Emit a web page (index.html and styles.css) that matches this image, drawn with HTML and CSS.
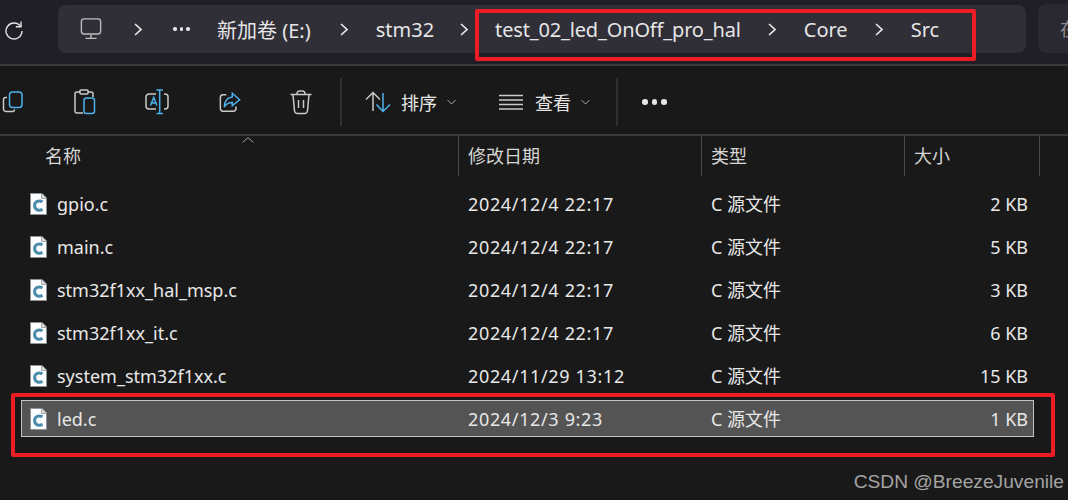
FILE: index.html
```html
<!DOCTYPE html>
<html lang="zh-CN">
<head>
    <meta charset="UTF-8">
    <title>Src</title>
    <link rel="stylesheet" href="styles.css">
</head>
<body>
    <svg class="sprite" width="0" height="0">
        <symbol id="file-c" viewBox="0 0 17 22">
            <path d="M.5.5H12L16.5 5V21.5H.5Z" fill="#fcfdfe" stroke="#8f9295"/>
            <path d="M11.5 1V5.5H16" fill="#d8dadc" stroke="#a5a7a9"/>
            <path d="M12.5 8.8C9 6.8 4.6 8.300 4.6 12.6S9 18.4 12.5 16.400" fill="none" stroke="#4b8cab" stroke-width="3"/>
        </symbol>
        <symbol id="chev" viewBox="0 0 8 13">
            <path d="M1 1L7 6.500L1 12" fill="none" stroke="#ececec" stroke-width="1.600"/>
        </symbol>
    </svg>

    <div class="addressbar">
        <svg class="refresh" width="20" height="20" viewBox="0 0 20 20" fill="none" stroke="#e4e4e4" stroke-width="1.400"><path d="M16.600 6.500A8 8 0 1 0 18 11"/><path d="M17 1.500V6.800H11.800"/></svg>
        <div class="breadcrumb">
            <svg class="pc" width="22" height="22" viewBox="0 0 24 24" fill="none" stroke="#bdbdbd" stroke-width="1.500"><rect x="1.500" y="1" width="21" height="16.500" rx="3"/><path d="M12 18V22M6 22.200H18"/></svg>
            <svg class="chev chev-first" width="8" height="13"><use href="#chev"/></svg>
            <span class="crumb-dots"><i></i><i></i><i></i></span>
            <span class="crumb crumb-disk">新加卷 (E:)</span>
            <svg class="chev" width="8" height="13"><use href="#chev"/></svg>
            <span class="crumb crumb-stm">stm32</span>
            <svg class="chev" width="8" height="13"><use href="#chev"/></svg>
            <span class="crumb crumb-test">test_02_led_OnOff_pro_hal</span>
            <svg class="chev" width="8" height="13"><use href="#chev"/></svg>
            <span class="crumb">Core</span>
            <svg class="chev" width="8" height="13"><use href="#chev"/></svg>
            <span class="crumb">Src</span>
        </div>
        <div class="search">在</div>
    </div>

    <div class="toolbar">
        <button class="tool tool-copy">
            <svg width="22" height="24" viewBox="0 0 22 24" fill="none" stroke-width="1.500"><path d="M5 7.500H3.500A2 2 0 0 0 1.500 9.500V19A2.500 2.500 0 0 0 4 21.500H10.500A2 2 0 0 0 12.500 19.500" stroke="#c9c9c9"/><rect x="7.500" y="2" width="12.500" height="15.500" rx="3" stroke="#4db2ec"/></svg>
        </button>
        <button class="tool tool-paste">
            <svg width="22" height="26" viewBox="0 0 22 26" fill="none" stroke-width="1.500"><path d="M6 3H3A2 2 0 0 0 1 5V22A2 2 0 0 0 3 24H9" stroke="#c9c9c9"/><path d="M14 3H17A2 2 0 0 1 19 5V8" stroke="#c9c9c9"/><rect x="6" y="1" width="8" height="4" rx="1" stroke="#c9c9c9"/><rect x="10" y="9" width="10.500" height="15.500" rx="2.500" stroke="#4db2ec"/></svg>
        </button>
        <button class="tool tool-rename">
            <svg width="24" height="26" viewBox="0 0 24 26" fill="none" stroke-width="1.500"><path d="M11 5H4A3 3 0 0 0 1 8V17A3 3 0 0 0 4 20H11M19 5H20A3 3 0 0 1 23 8V17A3 3 0 0 1 20 20H19" stroke="#c9c9c9"/><path d="M11.500 1H18M14.700 1V24.500M11.500 24.500H18" stroke="#4db2ec"/><path d="M5.500 16.500L8.700 8.500L12 16.500M6.700 14H11" stroke="#4db2ec"/></svg>
        </button>
        <button class="tool tool-share">
            <svg width="22" height="22" viewBox="0 0 24 24" fill="none" stroke-width="1.600"><path d="M8 4H4.500A3 3 0 0 0 1.500 7V19A3 3 0 0 0 4.500 22H15.500A3 3 0 0 0 18.500 19V17" stroke="#c9c9c9"/><path d="M14.500 2.500L22.500 9.500L14.500 16V12.500C10.500 12.500 7.800 14 5.800 17.500C6 11 9.500 7 14.500 6.500Z" stroke="#4db2ec"/></svg>
        </button>
        <button class="tool tool-trash">
            <svg width="22" height="25" viewBox="0 0 22 25" fill="none" stroke="#c9c9c9" stroke-width="1.500"><path d="M.5 4.500H21.500M7 4.500V3.500A2.500 2.500 0 0 1 9.500 1H12.500A2.500 2.500 0 0 1 15 3.500V4.500"/><path d="M3 4.500L4.500 21A3 3 0 0 0 7.500 23.500H14.500A3 3 0 0 0 17.500 21L19 4.500"/><path d="M8.500 10V18M13.500 10V18"/></svg>
        </button>
        <span class="tool-sep sep-first"></span>
        <button class="tool tool-sort">
            <svg width="26" height="22" viewBox="0 0 26 22" fill="none" stroke-width="1.500"><path d="M8 20V2M1 8.500L8 1.500L15 8.500" stroke="#c9c9c9"/><path d="M18 2V20M11.500 13.500L18 20.500L25 13.500" stroke="#4db2ec"/></svg>
            <span class="tool-label">排序</span>
            <svg class="caret" width="9" height="6" viewBox="0 0 9 6" fill="none" stroke="#a8a8a8"><path d="M.5 1L4.500 5L8.500 1"/></svg>
        </button>
        <button class="tool tool-view">
            <svg width="24" height="16" viewBox="0 0 24 16" fill="none" stroke="#c9c9c9" stroke-width="1.500"><path d="M0 1.500H24M0 6H24M0 10.500H24M0 15H24"/></svg>
            <span class="tool-label">查看</span>
            <svg class="caret" width="9" height="6" viewBox="0 0 9 6" fill="none" stroke="#a8a8a8"><path d="M.5 1L4.500 5L8.500 1"/></svg>
        </button>
        <span class="tool-sep sep-second"></span>
        <div class="tool-more"><i></i><i></i><i></i></div>
    </div>

    <div class="list-head">
        <div class="col col-name">名称<svg class="sort-up" width="12" height="6" viewBox="0 0 12 6" fill="none" stroke="#a0a0a0"><path d="M.5 5.500L6 .7L11.500 5.500"/></svg></div>
        <div class="col col-date">修改日期</div>
        <div class="col col-type">类型</div>
        <div class="col col-size">大小</div>
    </div>

    <div class="rows">
        <div class="row">
            <div class="cell-name"><svg class="icon" width="17" height="22"><use href="#file-c"/></svg>gpio.c</div>
            <div class="cell-date">2024/12/4 22:17</div>
            <div class="cell-type">C 源文件</div>
            <div class="cell-size">2 KB</div>
        </div>
        <div class="row">
            <div class="cell-name"><svg class="icon" width="17" height="22"><use href="#file-c"/></svg>main.c</div>
            <div class="cell-date">2024/12/4 22:17</div>
            <div class="cell-type">C 源文件</div>
            <div class="cell-size">5 KB</div>
        </div>
        <div class="row">
            <div class="cell-name"><svg class="icon" width="17" height="22"><use href="#file-c"/></svg>stm32f1xx_hal_msp.c</div>
            <div class="cell-date">2024/12/4 22:17</div>
            <div class="cell-type">C 源文件</div>
            <div class="cell-size">3 KB</div>
        </div>
        <div class="row">
            <div class="cell-name"><svg class="icon" width="17" height="22"><use href="#file-c"/></svg>stm32f1xx_it.c</div>
            <div class="cell-date">2024/12/4 22:17</div>
            <div class="cell-type">C 源文件</div>
            <div class="cell-size">6 KB</div>
        </div>
        <div class="row">
            <div class="cell-name"><svg class="icon" width="17" height="22"><use href="#file-c"/></svg>system_stm32f1xx.c</div>
            <div class="cell-date">2024/11/29 13:12</div>
            <div class="cell-type">C 源文件</div>
            <div class="cell-size">15 KB</div>
        </div>
        <div class="row selected">
            <div class="cell-name"><svg class="icon" width="17" height="22"><use href="#file-c"/></svg>led.c</div>
            <div class="cell-date">2024/12/3 9:23</div>
            <div class="cell-type">C 源文件</div>
            <div class="cell-size">1 KB</div>
        </div>
    </div>

    <!-- red annotation boxes drawn over the screenshot -->
    <div class="mark mark-path"></div>
    <div class="mark mark-row"></div>
    <div class="watermark">CSDN @BreezeJuvenile</div>
</body>
</html>
```

FILE: styles.css
```css
* {
    box-sizing: border-box;
}
html, body {
    height: 100%;
}
body {
    margin: 0;
    position: relative;
    overflow: hidden;
    background-color: #191919;
    color: #e6e6e6;
    font-family: "Noto Sans", "Noto Sans CJK SC", sans-serif;
    font-size: 18px;
}
.sprite {
    position: absolute;
}

/* address bar */
.addressbar {
    height: 66px;
    padding: 5px 0 0 4px;
    display: flex;
    align-items: flex-start;
    background-color: #201e26;
    border-bottom: 2px solid #3a3a3a;
}
.refresh {
    flex: none;
    margin-top: 15px;
}
.breadcrumb {
    flex: none;
    width: 968px;
    height: 48px;
    margin-left: 34px;
    padding-left: 22px;
    display: flex;
    align-items: center;
    gap: 27.5px;
    background-color: #302e36;
    border-radius: 8px;
    font-size: 20px;
    white-space: nowrap;
}
.pc {
    flex: none;
    margin-right: 4px;
}
.chev {
    flex: none;
}
.chev-first {
    margin-right: 4px;
}
.crumb-dots {
    display: flex;
    gap: 3px;
}
.crumb-dots i {
    width: 3.5px;
    height: 3.5px;
    border-radius: 50%;
    background-color: #e6e6e6;
}
.crumb-disk {
    margin-right: 2px;
}
.crumb-stm {
    margin-right: -2px;
}
.crumb-test {
    letter-spacing: -0.16px;
}
.search {
    flex: none;
    width: 60px;
    height: 49px;
    margin-left: 12px;
    margin-top: -1px;
    padding: 11px 0 0 22px;
    background-color: #2a2830;
    border-radius: 8px 0 0 8px;
    color: #8c8c8c;
}

/* command bar */
.toolbar {
    height: 70px;
    display: flex;
    align-items: center;
    padding-top: 4px;
    border-bottom: 2px solid #3a3a3a;
}
.tool {
    display: flex;
    align-items: center;
    padding: 0;
    border: none;
    background: none;
    color: #e6e6e6;
    font: inherit;
    font-size: 18px;
}
.tool-copy { margin-left: 2px; }
.tool-paste { margin-left: 50px; }
.tool-rename { margin-left: 49px; }
.tool-share { margin-left: 50px; }
.tool-trash { margin-left: 49px; }
.tool-view { margin-left: 43px; }
.tool-label {
    margin-left: 10px;
}
.tool-view .tool-label {
    margin-left: 12px;
}
.caret {
    margin-left: 10px;
}
.tool-sep {
    width: 2px;
    height: 48px;
    background-color: #303030;
}
.sep-first { margin: 0 23px 0 28px; }
.sep-second { margin-left: 26px; }
.tool-more {
    display: flex;
    gap: 4px;
    margin-left: 24px;
}
.tool-more i {
    width: 5.500px;
    height: 5.500px;
    border-radius: 50%;
    background-color: #e6e6e6;
}

/* column header */
.list-head {
    height: 41px;
    display: flex;
    font-size: 18px;
    color: #d6d6d6;
}
.col {
    height: 40px;
    line-height: 40px;
    border-right: 1px solid #4a4a4a;
    padding-left: 9px;
    position: relative;
}
.col-name { width: 459px; padding-left: 45px; }
.col-date { width: 243px; }
.col-type { width: 203px; }
.col-size { width: 135px; }
.sort-up {
    position: absolute;
    left: 242px;
    top: 1px;
}

/* file rows */
.rows {
    padding: 8px 34px 0 21px;
    display: flex;
    flex-direction: column;
    gap: 6px;
}
.row {
    height: 37px;
    display: flex;
    align-items: center;
    border: 1px solid transparent;
    font-size: 18px;
    color: #e8e8e8;
}
.row.selected {
    background-color: #545454;
    border-color: #c4c4c4;
}
.icon {
    margin-right: 10px;
    flex: none;
}
.cell-name {
    width: 446px;
    padding-left: 8px;
    display: flex;
    align-items: center;
}
.cell-date {
    width: 243px;
    letter-spacing: 0.65px;
}
.cell-type {
    width: 205px;
    padding-bottom: 2px;
}
.cell-size {
    flex: 1;
    text-align: right;
    padding-right: 5px;
}

/* annotations */
.mark {
    position: absolute;
    border: 4px solid #ee1c25;
    border-radius: 2px;
}
.mark-path {
    left: 475px;
    top: 9px;
    width: 501px;
    height: 52px;
}
.mark-row {
    left: 11px;
    top: 393px;
    width: 1044px;
    height: 64px;
}
.watermark {
    position: absolute;
    right: 4px;
    bottom: 7px;
    font-family: "Liberation Sans", sans-serif;
    font-size: 19.2px;
    color: #a4a4a4;
}
```
